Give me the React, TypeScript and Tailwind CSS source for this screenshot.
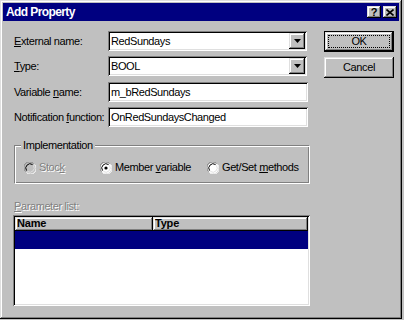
import React from 'react';

const sunken =
  'shadow-[inset_1px_1px_0_#808080,inset_-1px_-1px_0_#ffffff,inset_2px_2px_0_#000000,inset_-2px_-2px_0_#dfdfdf]';
const raised =
  'shadow-[inset_-1px_-1px_0_#000000,inset_1px_1px_0_#dfdfdf,inset_-2px_-2px_0_#808080,inset_2px_2px_0_#ffffff]';

const U: React.FC<{ children: React.ReactNode }> = ({ children }) => <span className="underline underline-offset-[1px]">{children}</span>;

const DownArrow = () => (
  <svg width="7" height="4" viewBox="0 0 7 4">
    <path d="M0 0h7L3.5 4z" fill="#000" />
  </svg>
);

const Combo: React.FC<{ value: string }> = ({ value }) => (
  <div className={`flex h-[20px] w-[199px] items-center bg-white p-[2px] ${sunken}`}>
    <span className="flex-1 pl-[1px]">{value}</span>
    <div className={`flex h-[16px] w-[16px] items-center justify-center bg-[#c0c0c0] ${raised}`}>
      <DownArrow />
    </div>
  </div>
);

const Edit: React.FC<{ value: string }> = ({ value }) => (
  <div className={`flex h-[20px] w-[200px] items-center bg-white px-[3px] ${sunken}`}>{value}</div>
);

const Radio: React.FC<{ checked?: boolean; disabled?: boolean }> = ({ checked, disabled }) => (
  <svg width="12" height="12" viewBox="0 0 12 12">
    <circle cx="6" cy="6" r="5.5" fill={disabled ? '#c0c0c0' : '#ffffff'} />
    <path d="M1.5 9.5A5.5 5.5 0 0 1 9.5 1.5" stroke="#808080" strokeWidth="1" fill="none" />
    <path d="M2.6 8.6A4.3 4.3 0 0 1 8.6 2.6" stroke="#000" strokeWidth="1" fill="none" />
    <path d="M10.5 2.5A5.5 5.5 0 0 1 2.5 10.5" stroke="#ffffff" strokeWidth="1" fill="none" />
    <path d="M9.4 3.4A4.3 4.3 0 0 1 3.4 9.4" stroke="#dfdfdf" strokeWidth="1" fill="none" />
    {checked && <circle cx="6" cy="6" r="1.6" fill="#000" />}
  </svg>
);

const Label: React.FC<{ children: React.ReactNode }> = ({ children }) => (
  <div className="w-[94px] shrink-0">{children}</div>
);

const disabledText = 'text-[#808080] [text-shadow:1px_1px_0_#ffffff]';

export default function App() {
  return (
    <div className="h-[320px] w-[404px] bg-[#c0c0c0]">
      <div
        className={`h-[319px] w-[402px] bg-[#c0c0c0] p-[3px] text-[11px] leading-[13px] tracking-[-0.4px] text-black ${raised}`}
        style={{ fontFamily: '"Liberation Sans", Arial, sans-serif' }}
      >
        {/* Title bar */}
        <div className="flex h-[18px] items-center justify-between bg-[#000080] pl-[3px] pr-[2px]">
          <span className="text-[12px] font-bold tracking-[-0.6px] text-white">Add Property</span>
          <div className="flex gap-[2px]">
            <div className={`flex h-[12px] w-[14px] items-center justify-center bg-[#c0c0c0] text-[11px] font-bold leading-none ${raised}`}>?</div>
            <div className={`flex h-[12px] w-[14px] items-center justify-center bg-[#c0c0c0] ${raised}`}>
              <svg width="8" height="7" viewBox="0 0 8 7">
                <path d="M0.5 0.5l7 6M7.5 0.5l-7 6" stroke="#000" strokeWidth="1.6" />
              </svg>
            </div>
          </div>
        </div>

        <div className="flex pl-[11px] pt-[10px]">
          {/* Left column */}
          <div className="w-[296px]">
            <div className="flex h-[20px] items-center">
              <Label><U>E</U>xternal name:</Label>
              <Combo value="RedSundays" />
            </div>
            <div className="mt-[5px] flex h-[20px] items-center">
              <Label><U>T</U>ype:</Label>
              <Combo value="BOOL" />
            </div>
            <div className="mt-[6px] flex h-[20px] items-center">
              <Label>Variable <U>n</U>ame:</Label>
              <Edit value="m_bRedSundays" />
            </div>
            <div className="mt-[5px] flex h-[20px] items-center">
              <Label>Notification <U>f</U>unction:</Label>
              <Edit value="OnRedSundaysChanged" />
            </div>

            {/* Implementation group */}
            <div className="relative mt-[18px] h-[39px] w-[296px] border border-b-white border-l-[#808080] border-r-white border-t-[#808080] shadow-[inset_1px_1px_0_#ffffff,inset_-1px_-1px_0_#808080]">
              <span className="absolute left-[6px] top-[-7px] bg-[#c0c0c0] px-[2px]">Implementation</span>
              <div className="flex pl-[9px] pt-[15px]">
                <div className="flex w-[76px] items-center gap-[3px]">
                  <Radio disabled />
                  <span className={disabledText}>Stoc<U>k</U></span>
                </div>
                <div className="flex w-[107px] items-center gap-[3px]">
                  <Radio checked />
                  <span>Member <U>v</U>ariable</span>
                </div>
                <div className="flex items-center gap-[3px]">
                  <Radio />
                  <span>Get/Set <U>m</U>ethods</span>
                </div>
              </div>
            </div>

            {/* Parameter list */}
            <div className={`mt-[16px] h-[13px] ${disabledText}`}><U>P</U>arameter list:</div>
            <div className={`-ml-[1px] mt-[2px] h-[91px] w-[297px] bg-white p-[2px] ${sunken}`}>
              <div className="flex h-[14px] text-[11px] font-bold leading-[13px] tracking-[-0.2px]">
                <div className={`w-[138px] bg-[#c0c0c0] pl-[2px] ${raised}`}>Name</div>
                <div className={`flex-1 bg-[#c0c0c0] pl-[2px] ${raised}`}>Type</div>
              </div>
              <div className="h-[18px] bg-[#000080]" />
            </div>
          </div>

          {/* Right column */}
          <div className="ml-[14px] flex flex-col gap-[5px]">
            <div className="h-[21px] w-[70px] bg-black p-[1px]">
              <div className={`flex h-full w-full items-center justify-center bg-[#c0c0c0] p-[3px] ${raised}`}>
                <div className="flex h-full w-full items-center justify-center border border-dotted border-black">OK</div>
              </div>
            </div>
            <div className={`flex h-[21px] w-[70px] items-center justify-center bg-[#c0c0c0] ${raised}`}>Cancel</div>
          </div>
        </div>
      </div>
    </div>
  );
}
